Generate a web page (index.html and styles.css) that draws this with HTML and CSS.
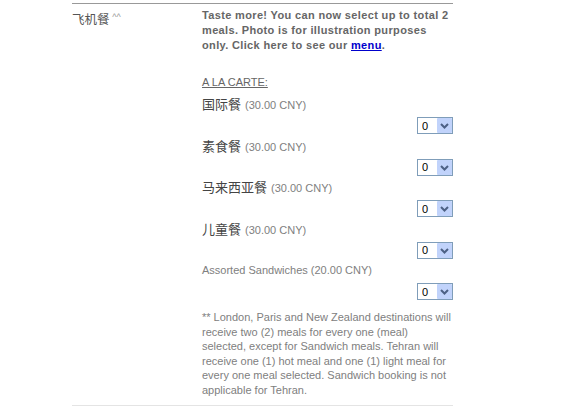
FILE: index.html
```html
<!DOCTYPE html>
<html>
<head>
<meta charset="utf-8">
<link rel="stylesheet" href="styles.css">
</head>
<body>
<div class="row">
  <div class="label">飞机餐 <span class="carets">^^</span></div>
  <div class="content">
    <p class="intro">Taste more! You can now select up to total 2 meals. Photo is for illustration purposes only. Click here to see our <a href="#">menu</a>.</p>
    <div class="carte">A LA CARTE:</div>
    <div class="meal">
      <div class="name"><span class="zh">国际餐</span> <span class="price">(30.00 CNY)</span></div>
      <div class="pick"><span class="sel"><select><option>0</option><option>1</option><option>2</option></select><span class="arrow"><svg width="15" height="15" viewBox="0 0 15 15"><path d="M4 6 L7.5 9.5 L11 6" fill="none" stroke="#4d6185" stroke-width="2"/></svg></span></span></div>
    </div>
    <div class="meal">
      <div class="name"><span class="zh">素食餐</span> <span class="price">(30.00 CNY)</span></div>
      <div class="pick"><span class="sel"><select><option>0</option><option>1</option><option>2</option></select><span class="arrow"><svg width="15" height="15" viewBox="0 0 15 15"><path d="M4 6 L7.5 9.5 L11 6" fill="none" stroke="#4d6185" stroke-width="2"/></svg></span></span></div>
    </div>
    <div class="meal">
      <div class="name"><span class="zh">马来西亚餐</span> <span class="price">(30.00 CNY)</span></div>
      <div class="pick"><span class="sel"><select><option>0</option><option>1</option><option>2</option></select><span class="arrow"><svg width="15" height="15" viewBox="0 0 15 15"><path d="M4 6 L7.5 9.5 L11 6" fill="none" stroke="#4d6185" stroke-width="2"/></svg></span></span></div>
    </div>
    <div class="meal">
      <div class="name"><span class="zh">儿童餐</span> <span class="price">(30.00 CNY)</span></div>
      <div class="pick"><span class="sel"><select><option>0</option><option>1</option><option>2</option></select><span class="arrow"><svg width="15" height="15" viewBox="0 0 15 15"><path d="M4 6 L7.5 9.5 L11 6" fill="none" stroke="#4d6185" stroke-width="2"/></svg></span></span></div>
    </div>
    <div class="meal">
      <div class="name"><span class="price">Assorted Sandwiches (20.00 CNY)</span></div>
      <div class="pick"><span class="sel"><select><option>0</option><option>1</option><option>2</option></select><span class="arrow"><svg width="15" height="15" viewBox="0 0 15 15"><path d="M4 6 L7.5 9.5 L11 6" fill="none" stroke="#4d6185" stroke-width="2"/></svg></span></span></div>
    </div>
    <p class="note">** London, Paris and New Zealand destinations will receive two (2) meals for every one (meal) selected, except for Sandwich meals. Tehran will receive one (1) hot meal and one (1) light meal for every one meal selected. Sandwich booking is not applicable for Tehran.</p>
  </div>
</div>
</body>
</html>
```
FILE: styles.css
```css
body {
  margin: 0;
  background: #fff;
  font-family: "Liberation Sans", Arial, "Noto Sans CJK SC", sans-serif;
  font-size: 11px;
  color: #666;
}
.row {
  margin: 3px 0 0 72px;
  width: 381px;
  border-top: 1px solid #999;
  border-bottom: 1px solid #e4e4e4;
  display: flex;
  padding-top: 4px;
  padding-bottom: 8px;
}
.label {
  width: 130px;
  flex: none;
  font-family: "Noto Sans CJK SC", sans-serif;
  font-size: 12.5px;
  color: #555;
  line-height: 16px;
  height: 16px;
  margin-top: 3px;
}
.carets {
  font-family: "Liberation Sans", Arial, sans-serif;
  font-size: 9px;
  color: #999;
  vertical-align: top;
  line-height: 12px;
}
.content {
  flex: 1;
  min-width: 0;
}
.intro {
  margin: 0;
  font-weight: bold;
  font-size: 11px;
  letter-spacing: 0.35px;
  line-height: 15px;
  color: #666;
}
.intro a {
  color: #0000cc;
}
.carte {
  margin-top: 22px;
  text-decoration: underline;
  font-size: 11px;
  line-height: 14px;
}
.meal {
  margin-top: 3.5px;
}
.carte + .meal {
  margin-top: 7px;
}
.name {
  line-height: 16px;
  height: 16px;
  display: flex;
  align-items: baseline;
  gap: 4px;
}
.zh {
  font-family: "Noto Sans CJK SC", sans-serif;
  font-size: 13px;
  line-height: 16px;
  color: #444;
}
.price {
  font-size: 11px;
  line-height: 16px;
  color: #808080;
}
.pick {
  display: flex;
  justify-content: flex-end;
  margin-top: 5px;
}
.sel {
  position: relative;
  display: block;
  width: 36px;
  height: 17px;
}
.sel select {
  appearance: none;
  -webkit-appearance: none;
  width: 36px;
  height: 17px;
  border: 1px solid #7f9db9;
  border-radius: 0;
  background: #fff;
  font-family: "Liberation Sans", Arial, sans-serif;
  font-size: 11px;
  color: #000;
  padding: 0 0 0 4px;
  margin: 0;
  display: block;
}
.arrow {
  position: absolute;
  right: 1px;
  top: 1px;
  width: 15px;
  height: 15px;
  background: #c1d3fb;
  border-radius: 1px;
  pointer-events: none;
}
.arrow svg {
  display: block;
}
.note {
  margin: 10px 0 0;
  line-height: 14.5px;
  font-size: 11px;
  color: #808080;
}
```
